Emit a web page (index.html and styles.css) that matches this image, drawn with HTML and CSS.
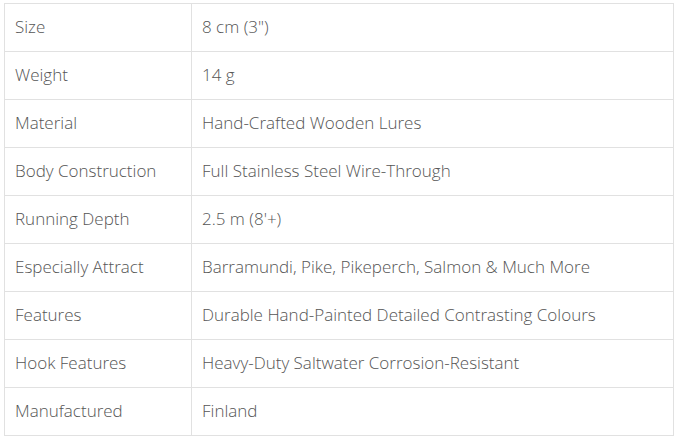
FILE: index.html
```html
<!DOCTYPE html>
<html>
<head>
<meta charset="utf-8">
<link rel="stylesheet" href="styles.css">
</head>
<body>
<table class="specs">
<tbody>
<tr><td class="label">Size</td><td class="value">8 cm (3")</td></tr>
<tr><td class="label">Weight</td><td class="value">14 g</td></tr>
<tr><td class="label">Material</td><td class="value">Hand-Crafted Wooden Lures</td></tr>
<tr><td class="label">Body Construction</td><td class="value">Full Stainless Steel Wire-Through</td></tr>
<tr><td class="label">Running Depth</td><td class="value">2.5 m (8'+)</td></tr>
<tr><td class="label">Especially Attract</td><td class="value">Barramundi, Pike, Pikeperch, Salmon &amp; Much More</td></tr>
<tr><td class="label">Features</td><td class="value">Durable Hand-Painted Detailed Contrasting Colours</td></tr>
<tr><td class="label">Hook Features</td><td class="value">Heavy-Duty Saltwater Corrosion-Resistant</td></tr>
<tr><td class="label">Manufactured</td><td class="value">Finland</td></tr>
</tbody>
</table>
</body>
</html>
```
FILE: styles.css
```css
html, body {
  margin: 0;
  background: #fff;
}
body {
  padding: 3px 4px;
  font-family: "Open Sans", "Lato", sans-serif;
  font-size: 17px;
  font-weight: 300;
  color: #555;
}
.specs {
  border-collapse: collapse;
  width: 670px;
}
.specs td {
  border: 1px solid #e1e1e1;
  height: 48px;
  padding: 0 10px 1px;
  box-sizing: border-box;
  vertical-align: middle;
  line-height: 20px;
}
.specs .label {
  width: 187px;
}
```
